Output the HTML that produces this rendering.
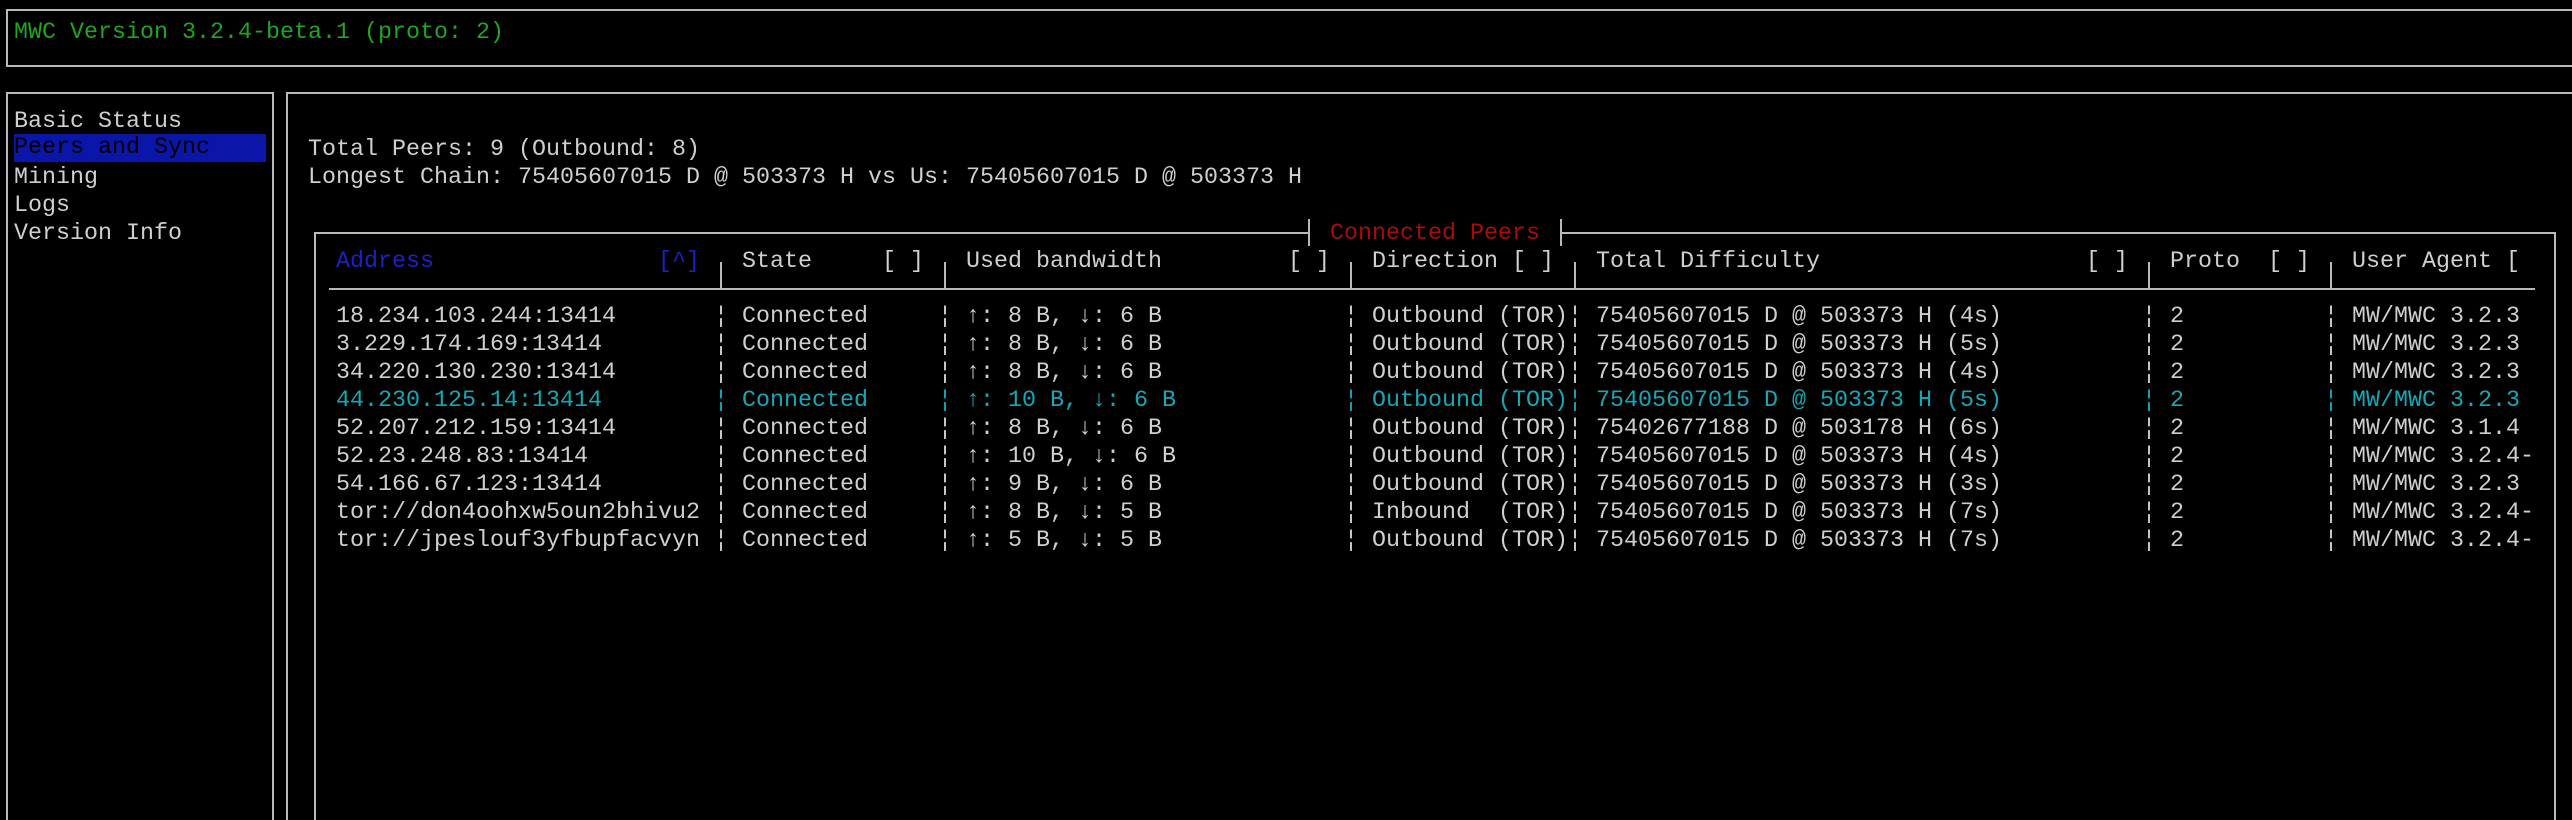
<!DOCTYPE html>
<html><head><meta charset="utf-8"><style>
html,body{margin:0;padding:0;background:#000;width:2572px;height:820px;overflow:hidden;position:relative}
.t{position:absolute;font-family:"Liberation Mono","DejaVu Sans Mono",monospace;font-size:23.33px;line-height:27.86px;height:27.86px;white-space:pre;color:#cfcfcf;margin-top:3px}
.h{position:absolute;height:2px;background:#b8b8b8}
.v{position:absolute;width:2px;background:#b8b8b8}
.g{color:#1fa51f}.b{color:#1b22c4}.c{color:#18a6b6}.r{color:#a80c0c}.k{color:#000}
</style></head><body>
<div class="h" style="left:6px;top:9px;width:2566px"></div>
<div class="h" style="left:6px;top:65px;width:2566px"></div>
<div class="v" style="left:6px;top:9px;height:58px"></div>
<div class="t g" style="left:14px;top:16.5px">MWC Version 3.2.4-beta.1 (proto: 2)</div>
<div class="h" style="left:6px;top:92px;width:268px"></div>
<div class="v" style="left:6px;top:92px;height:728px"></div>
<div class="v" style="left:272px;top:92px;height:728px"></div>
<div style="position:absolute;left:14px;top:134px;width:252px;height:28px;background:#0a16a8"></div>
<div class="t" style="left:14px;top:106px">Basic Status</div>
<div class="t k" style="left:14px;top:134px;margin-top:1px">Peers and Sync</div>
<div class="t" style="left:14px;top:162px">Mining</div>
<div class="t" style="left:14px;top:190px">Logs</div>
<div class="t" style="left:14px;top:218px">Version Info</div>
<div class="h" style="left:286px;top:92px;width:2286px"></div>
<div class="v" style="left:286px;top:92px;height:728px"></div>
<div class="t" style="left:308px;top:134px">Total Peers: 9 (Outbound: 8)</div>
<div class="t" style="left:308px;top:162px">Longest Chain: 75405607015 D @ 503373 H vs Us: 75405607015 D @ 503373 H</div>
<div class="h" style="left:314px;top:232px;width:996px"></div>
<div class="v" style="left:1308px;top:219px;height:27px"></div>
<div class="t r" style="left:1330px;top:218px">Connected Peers</div>
<div class="v" style="left:1560px;top:219px;height:27px"></div>
<div class="h" style="left:1560px;top:232px;width:996px"></div>
<div class="v" style="left:314px;top:232px;height:588px"></div>
<div class="v" style="left:2554px;top:232px;height:588px"></div>
<div class="h" style="left:329px;top:288px;width:2206px"></div>
<div class="v" style="left:720px;top:262px;height:27px"></div>
<div class="v" style="left:944px;top:262px;height:27px"></div>
<div class="v" style="left:1350px;top:262px;height:27px"></div>
<div class="v" style="left:1574px;top:262px;height:27px"></div>
<div class="v" style="left:2148px;top:262px;height:27px"></div>
<div class="v" style="left:2330px;top:262px;height:27px"></div>
<div class="t b" style="left:336px;top:245.5px">Address</div>
<div class="t b" style="left:658px;top:245.5px">[^]</div>
<div class="t" style="left:742px;top:245.5px">State</div>
<div class="t" style="left:882px;top:245.5px">[ ]</div>
<div class="t" style="left:966px;top:245.5px">Used bandwidth</div>
<div class="t" style="left:1288px;top:245.5px">[ ]</div>
<div class="t" style="left:1372px;top:245.5px">Direction [ ]</div>
<div class="t" style="left:1596px;top:245.5px">Total Difficulty</div>
<div class="t" style="left:2086px;top:245.5px">[ ]</div>
<div class="t" style="left:2170px;top:245.5px">Proto  [ ]</div>
<div class="t" style="left:2352px;top:245.5px">User Agent [</div>
<div class="t" style="left:336px;top:301px">18.234.103.244:13414</div><div class="t" style="left:714px;top:301px">¦ Connected     ¦ ↑: 8 B, ↓: 6 B</div><div class="t" style="left:1344px;top:301px">¦ Outbound (TOR)¦ 75405607015 D @ 503373 H (4s)</div><div class="t" style="left:2142px;top:301px">¦ 2</div><div class="t" style="left:2324px;top:301px">¦ MW/MWC 3.2.3</div>
<div class="t" style="left:336px;top:329px">3.229.174.169:13414</div><div class="t" style="left:714px;top:329px">¦ Connected     ¦ ↑: 8 B, ↓: 6 B</div><div class="t" style="left:1344px;top:329px">¦ Outbound (TOR)¦ 75405607015 D @ 503373 H (5s)</div><div class="t" style="left:2142px;top:329px">¦ 2</div><div class="t" style="left:2324px;top:329px">¦ MW/MWC 3.2.3</div>
<div class="t" style="left:336px;top:357px">34.220.130.230:13414</div><div class="t" style="left:714px;top:357px">¦ Connected     ¦ ↑: 8 B, ↓: 6 B</div><div class="t" style="left:1344px;top:357px">¦ Outbound (TOR)¦ 75405607015 D @ 503373 H (4s)</div><div class="t" style="left:2142px;top:357px">¦ 2</div><div class="t" style="left:2324px;top:357px">¦ MW/MWC 3.2.3</div>
<div class="t c" style="left:336px;top:385px">44.230.125.14:13414</div><div class="t c" style="left:714px;top:385px">¦ Connected     ¦ ↑: 10 B, ↓: 6 B</div><div class="t c" style="left:1344px;top:385px">¦ Outbound (TOR)¦ 75405607015 D @ 503373 H (5s)</div><div class="t c" style="left:2142px;top:385px">¦ 2</div><div class="t c" style="left:2324px;top:385px">¦ MW/MWC 3.2.3</div>
<div class="t" style="left:336px;top:413px">52.207.212.159:13414</div><div class="t" style="left:714px;top:413px">¦ Connected     ¦ ↑: 8 B, ↓: 6 B</div><div class="t" style="left:1344px;top:413px">¦ Outbound (TOR)¦ 75402677188 D @ 503178 H (6s)</div><div class="t" style="left:2142px;top:413px">¦ 2</div><div class="t" style="left:2324px;top:413px">¦ MW/MWC 3.1.4</div>
<div class="t" style="left:336px;top:441px">52.23.248.83:13414</div><div class="t" style="left:714px;top:441px">¦ Connected     ¦ ↑: 10 B, ↓: 6 B</div><div class="t" style="left:1344px;top:441px">¦ Outbound (TOR)¦ 75405607015 D @ 503373 H (4s)</div><div class="t" style="left:2142px;top:441px">¦ 2</div><div class="t" style="left:2324px;top:441px">¦ MW/MWC 3.2.4-</div>
<div class="t" style="left:336px;top:469px">54.166.67.123:13414</div><div class="t" style="left:714px;top:469px">¦ Connected     ¦ ↑: 9 B, ↓: 6 B</div><div class="t" style="left:1344px;top:469px">¦ Outbound (TOR)¦ 75405607015 D @ 503373 H (3s)</div><div class="t" style="left:2142px;top:469px">¦ 2</div><div class="t" style="left:2324px;top:469px">¦ MW/MWC 3.2.3</div>
<div class="t" style="left:336px;top:497px">tor://don4oohxw5oun2bhivu2</div><div class="t" style="left:714px;top:497px">¦ Connected     ¦ ↑: 8 B, ↓: 5 B</div><div class="t" style="left:1344px;top:497px">¦ Inbound  (TOR)¦ 75405607015 D @ 503373 H (7s)</div><div class="t" style="left:2142px;top:497px">¦ 2</div><div class="t" style="left:2324px;top:497px">¦ MW/MWC 3.2.4-</div>
<div class="t" style="left:336px;top:525px">tor://jpeslouf3yfbupfacvyn</div><div class="t" style="left:714px;top:525px">¦ Connected     ¦ ↑: 5 B, ↓: 5 B</div><div class="t" style="left:1344px;top:525px">¦ Outbound (TOR)¦ 75405607015 D @ 503373 H (7s)</div><div class="t" style="left:2142px;top:525px">¦ 2</div><div class="t" style="left:2324px;top:525px">¦ MW/MWC 3.2.4-</div>
</body></html>
